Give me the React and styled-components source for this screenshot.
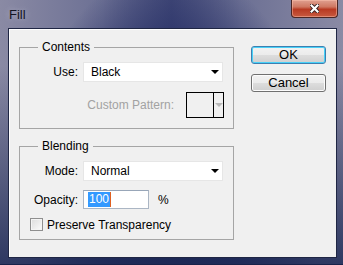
import styled, { createGlobalStyle } from "styled-components";

const GlobalStyle = createGlobalStyle`
  html, body {
    margin: 0;
    padding: 0;
    background: #1a2450;
  }
  body {
    font-family: "Liberation Sans", Arial, sans-serif;
    font-size: 12px;
  }
`;

const Window = styled.div`
  width: 343px;
  height: 265px;
  display: flex;
  flex-direction: column;
  box-sizing: border-box;
  background:
    linear-gradient(to bottom, rgba(30, 40, 85, 0) 0%, rgba(30, 40, 85, 0) 25%, rgba(30, 42, 86, 0.85) 100%),
    radial-gradient(ellipse 55% 110% at 50% 75%, #0e1846 0%, #232c64 40%, rgba(100, 105, 140, 0) 80%),
    linear-gradient(to right, #8a8aa4 0%, #6c7094 30%, #454c7a 50%, #6c7094 70%, #8a8aa4 100%);
  border-bottom: 1px solid #18224a;
  overflow: hidden;
`;

const TitleBar = styled.div`
  height: 27px;
  flex: none;
  display: flex;
  align-items: flex-start;
  justify-content: space-between;
  padding: 0 5px 0 9px;
`;

const Title = styled.span`
  margin-top: 7px;
  font-size: 13px;
  color: #141420;
  text-shadow: 0 0 6px rgba(220, 220, 240, 0.6);
`;

const CloseButton = styled.div`
  width: 45px;
  height: 17px;
  display: flex;
  align-items: center;
  justify-content: center;
  border: 1px solid #4a2624;
  border-top: none;
  border-radius: 0 0 4px 4px;
  background: linear-gradient(to bottom, #e0a090 0%, #cf7862 40%, #b83a22 55%, #c85a40 100%);
  box-shadow: inset 0 0 0 1px rgba(255, 200, 180, 0.45);
`;

const Client = styled.div`
  flex: 1;
  margin: 1px 6px 6px 8px;
  background: #f0f0f0;
  border: 1px solid #1f2644;
  box-shadow: inset 1px 1px 0 #ffffff;
  display: grid;
  grid-template-columns: 215px 75px;
  column-gap: 17px;
  align-items: start;
  padding: 11px 0 0 10px;
`;

const LeftColumn = styled.div`
  display: flex;
  flex-direction: column;
  gap: 10px;
`;

const Group = styled.fieldset`
  margin: 0;
  padding: 0 9px ${(p) => p.$bottom}px 0;
  border: 1px solid #a5a5a5;
  display: flex;
  flex-direction: column;
  gap: ${(p) => p.$gap}px;
  min-width: 0;
`;

const Legend = styled.legend`
  margin-left: 18px;
  padding: 0 4px;
  line-height: 14px;
  color: #000;
`;

const Row = styled.div`
  display: flex;
  align-items: center;
  height: ${(p) => p.$h}px;
  margin-top: ${(p) => p.$top || 0}px;
  justify-content: ${(p) => (p.$end ? "flex-end" : "flex-start")};
  padding-left: ${(p) => p.$indent || 0}px;
`;

const Label = styled.label`
  width: 58px;
  text-align: right;
  margin-right: 5px;
  color: #000;
  white-space: nowrap;
`;

const Select = styled.div`
  width: 140px;
  height: 20px;
  box-sizing: border-box;
  background: #ffffff;
  border: 1px solid #e6e6e6;
  display: flex;
  align-items: center;
  justify-content: space-between;
  padding: 0 3px 0 7px;
  color: #000;
`;

const Arrow = styled.span`
  width: 0;
  height: 0;
  border-left: 4px solid transparent;
  border-right: 4px solid transparent;
  border-top: 4px solid ${(p) => (p.$disabled ? "#b8b8b8" : "#000")};
`;

const PatternLabel = styled.span`
  color: #a2a2a2;
  margin-right: 12px;
`;

const PatternSwatch = styled.div`
  width: 38px;
  height: 26px;
  box-sizing: border-box;
  border: 1px solid #000;
  display: grid;
  grid-template-columns: 26px 1fr;
`;

const SwatchArrow = styled.div`
  border-left: 1px solid #000;
  display: flex;
  align-items: center;
  justify-content: center;
`;

const Input = styled.div`
  width: 66px;
  height: 19px;
  box-sizing: border-box;
  background: #fff;
  border: 1px solid #abb6c4;
  border-top-color: #98a6b8;
  display: flex;
  align-items: center;
  padding-left: 4px;
`;

const Selected = styled.span`
  background: #3399ff;
  color: #fff;
  line-height: 15px;
  padding: 0 1px;
  border-right: 1px solid #e06020;
`;

const Percent = styled.span`
  margin-left: 9px;
`;

const Checkbox = styled.span`
  width: 13px;
  height: 13px;
  box-sizing: border-box;
  border: 1px solid #8f8f8f;
  background: linear-gradient(135deg, #dcdcdc, #fbfbfb);
  box-shadow: inset 0 0 0 1px #f4f4f4;
  margin-right: 4px;
`;

const RightColumn = styled.div`
  display: flex;
  flex-direction: column;
  gap: 10px;
  margin-top: 6px;
`;

const Button = styled.button`
  width: 75px;
  height: 18px;
  box-sizing: border-box;
  padding: 0;
  font-family: "Liberation Sans", Arial, sans-serif;
  font-size: 13px;
  line-height: 14px;
  color: #000;
  border-radius: 3px;
  border: 1px solid ${(p) => (p.$default ? "#3c7fb1" : "#707070")};
  background: linear-gradient(to bottom, #f2f2f2 0%, #ebebeb 50%, #dddddd 51%, #cfcfcf 100%);
  box-shadow: inset 0 0 0 1px ${(p) => (p.$default ? "#48d1f8" : "#fcfcfc")};
`;

function CloseIcon() {
  return (
    <svg width="9" height="9" viewBox="0 0 9 9">
      <path d="M1.5 1.5 L7.5 7.5 M7.5 1.5 L1.5 7.5" stroke="#3a2020" strokeWidth="4" strokeLinecap="square" />
      <path d="M1.5 1.5 L7.5 7.5 M7.5 1.5 L1.5 7.5" stroke="#ffffff" strokeWidth="2.2" strokeLinecap="square" />
    </svg>
  );
}

export default function App() {
  return (
    <>
      <GlobalStyle />
      <Window>
        <TitleBar>
          <Title>Fill</Title>
          <CloseButton>
            <CloseIcon />
          </CloseButton>
        </TitleBar>
        <Client>
          <LeftColumn>
            <Group $gap={10} $bottom={10}>
              <Legend>Contents</Legend>
              <Row $h={20} $top={8}>
                <Label>Use:</Label>
                <Select>
                  Black
                  <Arrow />
                </Select>
              </Row>
              <Row $h={26} $end>
                <PatternLabel>Custom Pattern:</PatternLabel>
                <PatternSwatch>
                  <span />
                  <SwatchArrow>
                    <Arrow $disabled />
                  </SwatchArrow>
                </PatternSwatch>
              </Row>
            </Group>
            <Group $gap={9} $bottom={8}>
              <Legend>Blending</Legend>
              <Row $h={20} $top={8}>
                <Label>Mode:</Label>
                <Select>
                  Normal
                  <Arrow />
                </Select>
              </Row>
              <Row $h={19}>
                <Label>Opacity:</Label>
                <Input>
                  <Selected>100</Selected>
                </Input>
                <Percent>%</Percent>
              </Row>
              <Row $h={13} $indent={10}>
                <Checkbox />
                Preserve Transparency
              </Row>
            </Group>
          </LeftColumn>
          <RightColumn>
            <Button $default>OK</Button>
            <Button>Cancel</Button>
          </RightColumn>
        </Client>
      </Window>
    </>
  );
}
